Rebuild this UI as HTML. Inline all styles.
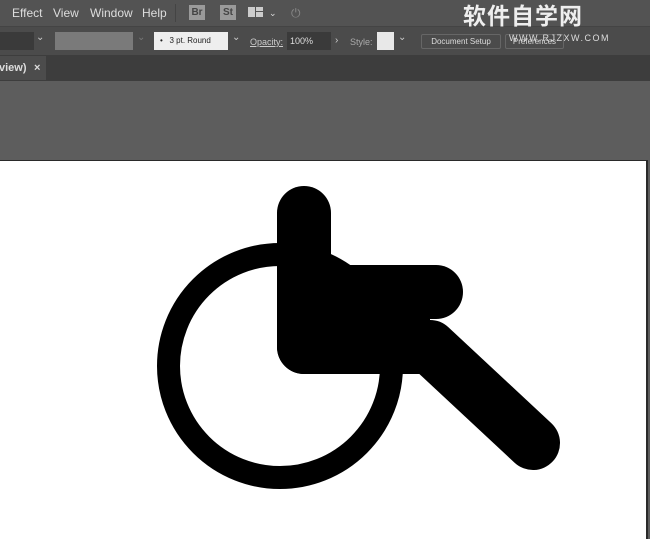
<!DOCTYPE html>
<html><head><meta charset="utf-8"><style>
*{margin:0;padding:0;box-sizing:border-box}
body{width:650px;height:539px;overflow:hidden;background:#5d5d5d;font-family:"Liberation Sans","Noto Sans CJK SC",sans-serif;position:relative}
.a{position:absolute}
#menu{top:0;left:0;width:650px;height:26px;background:#535353;color:#ddd;font-size:12px}
#menu span{position:absolute;top:6px}
#tb{top:26px;left:0;width:650px;height:29px;background:#4b4b4b;border-top:1px solid #444;font-size:9px;color:#ccc}
#tabs{top:55px;left:0;width:650px;height:26px;background:#3d3d3d}
#tab{top:56px;left:0;width:46px;height:24px;background:#4c4c4c;color:#ddd;font-size:11px;font-weight:bold}
.ic{background:#9a9a9a;color:#444;font-size:10px;font-weight:bold;text-align:center;line-height:15px;width:16px;height:15px;top:5px}
.btn{border:1px solid #666;border-radius:2px;height:15px;top:7px;color:#ddd;font-size:8px;text-align:center;line-height:13px}
</style></head><body>
<div id="menu" class="a">
<span style="left:12px">Effect</span><span style="left:53px">View</span><span style="left:90px">Window</span><span style="left:142px">Help</span>
<div class="a" style="left:175px;top:4px;width:1px;height:18px;background:#444"></div>
<div class="a ic" style="left:189px">Br</div>
<div class="a ic" style="left:220px">St</div>
<div class="a" style="left:248px;top:7px;width:7px;height:10px;background:#ccc"></div>
<div class="a" style="left:256px;top:7px;width:7px;height:4px;background:#ccc"></div>
<div class="a" style="left:256px;top:12px;width:7px;height:5px;background:#ccc"></div>
<span style="left:269px;font-size:9px;top:8px">⌄</span>
<span style="left:291px;color:#888">⏻</span>
</div>
<div id="tb" class="a">
<div class="a" style="left:0;top:5px;width:34px;height:18px;background:#3a3a3a"></div>
<div class="a" style="left:36px;top:5px;font-size:10px">⌄</div>
<div class="a" style="left:55px;top:5px;width:78px;height:18px;background:#7a7a7a"></div>
<div class="a" style="left:137px;top:5px;font-size:10px;color:#777">⌄</div>
<div class="a" style="left:154px;top:5px;width:74px;height:18px;background:#eee;color:#222;font-size:8px;line-height:18px;padding-left:6px">•&nbsp;&nbsp;&nbsp;3 pt. Round</div>
<div class="a" style="left:232px;top:5px;font-size:10px">⌄</div>
<div class="a" style="left:250px;top:10px;text-decoration:underline">Opacity:</div>
<div class="a" style="left:287px;top:5px;width:44px;height:18px;background:#3a3a3a;line-height:18px;padding-left:3px;color:#ddd">100%</div>
<div class="a" style="left:335px;top:8px;font-size:10px">›</div>
<div class="a" style="left:350px;top:10px;color:#aaa">Style:</div>
<div class="a" style="left:377px;top:5px;width:17px;height:18px;background:#e8e8e8"></div>
<div class="a" style="left:398px;top:5px;font-size:10px">⌄</div>
<div class="a btn" style="left:421px;width:80px">Document Setup</div>
<div class="a btn" style="left:505px;width:59px">Preferences</div>
</div>
<div class="a" style="left:463px;top:2px;font-size:23px;line-height:28px;color:#eee;letter-spacing:1px;font-weight:bold;z-index:5">软件自学网</div>
<div class="a" style="left:509px;top:33px;font-size:9px;color:#ddd;letter-spacing:1.5px;z-index:5">WWW.RJZXW.COM</div>
<div id="tabs" class="a"></div>
<div id="tab" class="a"><span class="a" style="left:-1px;top:6px">view)</span><span class="a" style="left:34px;top:6px">×</span></div>
<div class="a" style="left:0;top:160px;width:648px;height:379px;background:#2a2a2a"></div>
<div class="a" style="left:0;top:161px;width:646px;height:378px;background:#fff"></div>
<svg class="a" style="left:0;top:0" width="650" height="539">
<circle cx="280" cy="366" r="111.5" fill="none" stroke="#000" stroke-width="23"/>
<g stroke="#000" stroke-width="54" stroke-linecap="round" stroke-linejoin="round" fill="none">
<line x1="304" y1="213" x2="304" y2="347"/>
<line x1="304" y1="292" x2="436" y2="292"/>
<polyline points="304,347 430,347 533,443"/>
</g>
<rect x="304" y="300" width="126" height="40" fill="#000"/>
</svg>
</body></html>
